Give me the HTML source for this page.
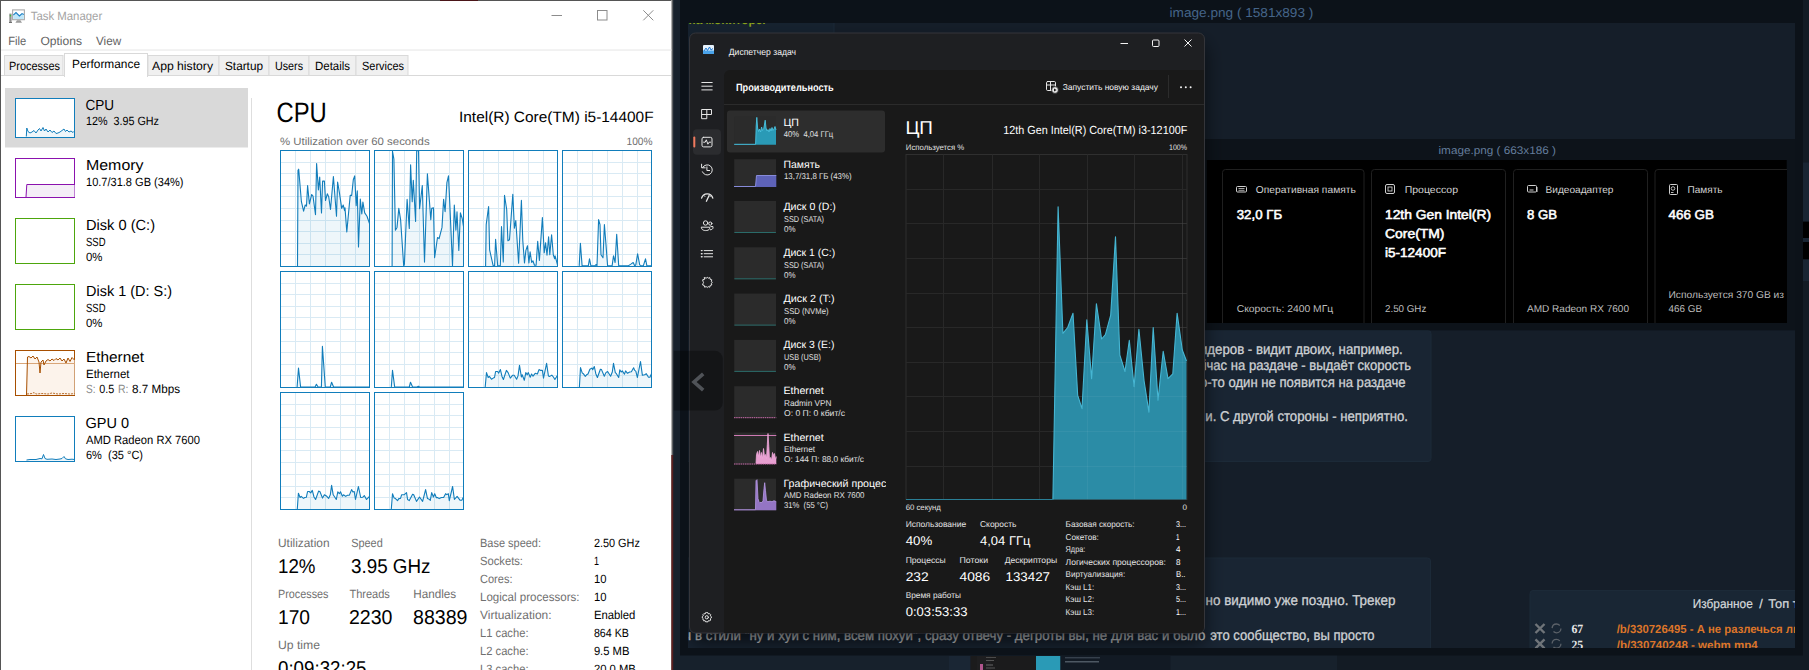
<!DOCTYPE html>
<html lang="ru">
<head>
<meta charset="utf-8">
<title>Task Manager</title>
<style>
html,body{margin:0;padding:0;background:#141d27;overflow:hidden}
body{width:1809px;height:670px;font-family:'Liberation Sans', 'DejaVu Sans', sans-serif}
#screen{position:absolute;left:0;top:0;width:1809px;height:670px;overflow:hidden}
svg{display:block}
</style>
</head>
<body>
<div id="screen">
<svg width="1809" height="670" viewBox="0 0 1809 670" font-family='"Liberation Sans", "DejaVu Sans", sans-serif' text-rendering="geometricPrecision">
<defs><filter id="shadow" x="-10%" y="-10%" width="120%" height="125%"><feGaussianBlur stdDeviation="10"/><feOffset dy="11"/><feComponentTransfer><feFuncA type="linear" slope="0.62"/></feComponentTransfer></filter><clipPath id="gclip"><rect x="1052" y="200" width="135" height="300"/></clipPath></defs>
<g id="image-viewer">
<rect x="673" y="0" width="1136" height="670" fill="#131b24"/>
<rect x="673" y="0" width="664" height="670" fill="#17212c"/>
<rect x="1803" y="162.5" width="6" height="118.5" fill="#192533"/>
<rect x="1803" y="221.6" width="6" height="16.4" fill="#000"/>
<rect x="1803" y="242" width="6" height="17.3" fill="#000"/>
<rect x="949" y="656" width="21.5" height="14" fill="#1a2634"/>
<rect x="970.5" y="656" width="65.5" height="14" fill="#1b1b1c"/>
<rect x="977" y="656" width="14" height="14" fill="#1e1e20"/>
<rect x="980" y="664" width="3" height="6" fill="#b0568d"/>
<rect x="986" y="657" width="10" height="1" fill="#4a4a4a"/>
<rect x="986" y="660" width="8" height="1" fill="#555"/>
<rect x="986" y="664.5" width="7" height="1" fill="#666"/>
<rect x="986" y="667.5" width="9" height="1" fill="#555"/>
<rect x="1036" y="656" width="24.5" height="14" fill="#2a9ab6"/>
<rect x="1060.5" y="656" width="110" height="14" fill="#121a24"/>
<rect x="1065" y="657.3" width="35" height="1" fill="#47525e"/>
<rect x="1065" y="661.2" width="34" height="1.2" fill="#5d6873"/>
<rect x="680" y="0" width="1123" height="655.5" fill="#0c1219"/>
<text x="1169.6" y="16.6" font-size="13" fill="#456589" textLength="143.7" lengthAdjust="spacingAndGlyphs">image.png ( 1581x893 )</text>
<clipPath id="imgclip"><rect x="688" y="23" width="1107" height="625"/></clipPath>
<g id="shared-image" clip-path="url(#imgclip)">
<g id="inner-page">
<rect x="688" y="23" width="1107" height="625" fill="#151e29"/>
<rect x="688" y="23" width="146" height="140" fill="#16222f"/>
<rect x="833.5" y="23" width="1" height="140" fill="#1b2938"/>
<text x="688.5" y="23.8" font-size="13" fill="#8aa31a" textLength="77" lengthAdjust="spacingAndGlyphs" font-weight="700">на мониторе.</text>
<rect x="680" y="330.5" width="751" height="131" fill="#192533" stroke="#1c2a38" stroke-width="1" rx="3"/>
<text x="1402.7" y="353.5" font-size="14.2" fill="#cfd2d5" textLength="209.4" lengthAdjust="spacingAndGlyphs" text-anchor="end"  stroke="#cfd2d5" stroke-width="0.3">сидеров - видит двоих, например.</text>
<text x="1411.1" y="370.4" font-size="14.2" fill="#cfd2d5" textLength="225.7" lengthAdjust="spacingAndGlyphs" text-anchor="end"  stroke="#cfd2d5" stroke-width="0.3">сейчас на раздаче - выдаёт скорость</text>
<text x="1405.6" y="387.3" font-size="14.2" fill="#cfd2d5" textLength="217.4" lengthAdjust="spacingAndGlyphs" text-anchor="end"  stroke="#cfd2d5" stroke-width="0.3">кто-то один не появится на раздаче</text>
<text x="1408" y="421" font-size="14.2" fill="#cfd2d5" textLength="202.7" lengthAdjust="spacingAndGlyphs" text-anchor="end"  stroke="#cfd2d5" stroke-width="0.3">и. С другой стороны - неприятно.</text>
<rect x="680" y="558" width="750.5" height="100" fill="#192533" stroke="#1c2a38" stroke-width="1" rx="3"/>
<text x="1205.6" y="605.4" font-size="14.2" fill="#cfd2d5" textLength="189.9" lengthAdjust="spacingAndGlyphs"  stroke="#cfd2d5" stroke-width="0.3">но видимо уже поздно. Трекер</text>
<text x="691.3" y="639.5" font-size="14.2" fill="#cfd2d5" text-anchor="end"  stroke="#cfd2d5" stroke-width="0.3">ответы</text>
<text x="695" y="639.5" font-size="14.2" fill="#cfd2d5" textLength="510.4" lengthAdjust="spacingAndGlyphs"  stroke="#cfd2d5" stroke-width="0.3">в стили "ну и хуй с ним, всем похуй", сразу отвечу - дегроты вы, не для вас и было</text>
<text x="1210.2" y="639.5" font-size="14.2" fill="#cfd2d5" textLength="164.4" lengthAdjust="spacingAndGlyphs"  stroke="#cfd2d5" stroke-width="0.3">это сообщество, вы просто</text>
<rect x="1530" y="590.5" width="270" height="70" fill="#192634" stroke="#1c2a38" stroke-width="1" rx="3"/>
<text x="1692.7" y="607.9" font-size="12.6" fill="#d6dadd" textLength="60.1" lengthAdjust="spacingAndGlyphs"  stroke="#d6dadd" stroke-width="0.2">Избранное</text>
<text x="1759.3" y="607.9" font-size="12.6" fill="#d6dadd"  stroke="#d6dadd" stroke-width="0.2">/</text>
<text x="1768.2" y="607.9" font-size="12.6" fill="#d6dadd" textLength="66.3" lengthAdjust="spacingAndGlyphs"  stroke="#d6dadd" stroke-width="0.2">Топ тредов</text>
<path d="M1535.5 624.0l9 9m0 -9l-9 9" stroke="#6f7479" stroke-width="2.4" fill="none"/>
<circle cx="1556.5" cy="628.4" r="4.4" fill="none" stroke="#5c6269" stroke-width="1.3" stroke-dasharray="10 3.8"/>
<text x="1571.4" y="633.2" font-size="12.5" fill="#e8e8e8" textLength="11.8" lengthAdjust="spacingAndGlyphs" font-weight="700" font-family='"Liberation Serif", "DejaVu Serif", serif'>67</text>
<text x="1616.7" y="633.2" font-size="11.7" fill="#dd7529" textLength="208" lengthAdjust="spacingAndGlyphs" font-weight="700">/b/330726495 - А не разлечься ли нам</text>
<path d="M1535.5 639.4l9 9m0 -9l-9 9" stroke="#6f7479" stroke-width="2.4" fill="none"/>
<circle cx="1556.5" cy="643.8" r="4.4" fill="none" stroke="#5c6269" stroke-width="1.3" stroke-dasharray="10 3.8"/>
<text x="1571.4" y="648.6" font-size="12.5" fill="#e8e8e8" textLength="11.8" lengthAdjust="spacingAndGlyphs" font-weight="700" font-family='"Liberation Serif", "DejaVu Serif", serif'>25</text>
<text x="1616.7" y="648.6" font-size="11.7" fill="#dd7529" textLength="141" lengthAdjust="spacingAndGlyphs" font-weight="700">/b/330740248 - webm mp4</text>
</g>
<g id="specs-popup">
<rect x="1200" y="139" width="600" height="191.3" fill="#0d131a"/>
<text x="1438.5" y="153.5" font-size="11" fill="#647d9c" textLength="117.5" lengthAdjust="spacingAndGlyphs">image.png ( 663x186 )</text>
<rect x="1206.8" y="160" width="579.9" height="163" fill="#000000"/>
<clipPath id="cardclip"><rect x="1200" y="160" width="587" height="163"/></clipPath><g clip-path="url(#cardclip)">
<rect x="1222.5" y="169.5" width="141.5" height="170" fill="#000" stroke="#202020" stroke-width="1" rx="3"/>
<rect x="1371.5" y="169.5" width="134" height="170" fill="#000" stroke="#202020" stroke-width="1" rx="3"/>
<rect x="1513.5" y="169.5" width="134" height="170" fill="#000" stroke="#202020" stroke-width="1" rx="3"/>
<rect x="1655" y="169.5" width="140" height="170" fill="#000" stroke="#202020" stroke-width="1" rx="3"/>
</g>
<g stroke="#cfcfcf" fill="none" stroke-width="1"><rect x="1236.5" y="186.5" width="10" height="5.5" rx="1"/><path d="M1238.5 188.5h6M1238.5 190.3h6" stroke-width="0.8"/></g>
<text x="1255.8" y="192.7" font-size="10" fill="#d2d2d2" textLength="100" lengthAdjust="spacingAndGlyphs">Оперативная память</text>
<text x="1236.7" y="219.3" font-size="13" fill="#fff" textLength="45.4" lengthAdjust="spacingAndGlyphs"  stroke="#fff" stroke-width="0.55">32,0 ГБ</text>
<text x="1236.7" y="311.8" font-size="10" fill="#bdbdbd" textLength="96.5" lengthAdjust="spacingAndGlyphs">Скорость: 2400 МГц</text>
<g stroke="#cfcfcf" fill="none" stroke-width="1"><rect x="1385.5" y="184.5" width="9" height="9" rx="1.5"/><rect x="1388" y="187" width="4" height="4" stroke-width="0.9"/></g>
<text x="1404.7" y="192.7" font-size="10" fill="#d2d2d2" textLength="53.3" lengthAdjust="spacingAndGlyphs">Процессор</text>
<text x="1385" y="219.3" font-size="13" fill="#fff" textLength="106" lengthAdjust="spacingAndGlyphs"  stroke="#fff" stroke-width="0.55">12th Gen Intel(R)</text>
<text x="1385" y="238.2" font-size="13" fill="#fff" textLength="59.5" lengthAdjust="spacingAndGlyphs"  stroke="#fff" stroke-width="0.55">Core(TM)</text>
<text x="1385" y="257" font-size="13" fill="#fff" textLength="61" lengthAdjust="spacingAndGlyphs"  stroke="#fff" stroke-width="0.55">i5-12400F</text>
<text x="1385" y="311.8" font-size="10" fill="#bdbdbd" textLength="41.3" lengthAdjust="spacingAndGlyphs">2.50 GHz</text>
<g stroke="#cfcfcf" fill="none" stroke-width="1"><rect x="1527.5" y="185.5" width="9" height="6.5" rx="1"/><path d="M1529.5 190h4" /><path d="M1537 187v5" /></g>
<text x="1545.5" y="192.7" font-size="10" fill="#d2d2d2" textLength="68" lengthAdjust="spacingAndGlyphs">Видеоадаптер</text>
<text x="1527" y="219.3" font-size="13" fill="#fff" textLength="30" lengthAdjust="spacingAndGlyphs"  stroke="#fff" stroke-width="0.55">8 GB</text>
<text x="1527" y="311.8" font-size="10" fill="#bdbdbd" textLength="102" lengthAdjust="spacingAndGlyphs">AMD Radeon RX 7600</text>
<g stroke="#cfcfcf" fill="none" stroke-width="1"><rect x="1669.5" y="184.5" width="8" height="10" rx="1"/><circle cx="1673" cy="188.5" r="1.8" stroke-width="0.9"/><path d="M1671 192.5h2.5" stroke-width="0.9"/></g>
<text x="1687.5" y="192.7" font-size="10" fill="#d2d2d2" textLength="35" lengthAdjust="spacingAndGlyphs">Память</text>
<text x="1668.5" y="219.3" font-size="13" fill="#fff" textLength="45.5" lengthAdjust="spacingAndGlyphs"  stroke="#fff" stroke-width="0.55">466 GB</text>
<text x="1668.5" y="297.5" font-size="10" fill="#bdbdbd" textLength="115.5" lengthAdjust="spacingAndGlyphs">Используется 370 GB из</text>
<text x="1668.5" y="311.8" font-size="10" fill="#bdbdbd" textLength="33.5" lengthAdjust="spacingAndGlyphs">466 GB</text>
</g>
<g id="win11-taskmgr">
<rect x="689.5" y="33" width="515" height="600" rx="6" fill="#000" filter="url(#shadow)"/>
<rect x="689.5" y="33" width="515" height="600" fill="#1e1f22" stroke="#34353a" stroke-width="1" rx="6"/>
<path d="M724 633V76a6 6 0 0 1 6-6H1204v557a6 6 0 0 1-6 6z" fill="#191919"/>
<line x1="724" y1="104.5" x2="1204" y2="104.5" stroke="#2b2b2b" stroke-width="1" />
<g id="tm11-icon"><rect x="703" y="45" width="11" height="9" rx="1" fill="#e6f1fb"/><rect x="703" y="50.5" width="11" height="3.5" fill="#4aa3ea"/><polyline points="704,51 706,48 707.5,50.5 709.5,47 711,50 713,48.5" fill="none" stroke="#1f78d1" stroke-width="1"/></g>
<text x="728.8" y="54.5" font-size="9" fill="#f2f2f2" textLength="67.2" lengthAdjust="spacingAndGlyphs">Диспетчер задач</text>
<line x1="1120.5" y1="43.5" x2="1128" y2="43.5" stroke="#f2f2f2" stroke-width="1" />
<rect x="1152.5" y="40" width="6.5" height="6.5" fill="none" stroke="#f2f2f2" stroke-width="1" rx="1"/>
<path d="M1184.5 39.5l7 7m0-7l-7 7" stroke="#f2f2f2" stroke-width="1" fill="none"/>
<rect x="693" y="129.2" width="28" height="25.5" fill="#2b2c2f" rx="4"/>
<rect x="693.3" y="136.5" width="2" height="11" fill="#f0795d" rx="1"/>
<g id="nav-icons" stroke="#e6e6e6" stroke-width="1" fill="none" stroke-linecap="round" stroke-linejoin="round">
<path d="M701.8 82.5h10.4M701.8 86.2h10.4M701.8 89.9h10.4"/>
<path d="M702 109.5h9.5v5h-4.7v4.2h-4.8zM706.8 109.5v5M702 114.5h4.8"/>
<rect x="702" y="137.3" width="10" height="9.6" rx="1.6"/><path d="M703.6 142.2h1.6l1.1-2.4 1.6 4.4 1.2-2h1.5"/>
<path d="M702.6 167.6a5.1 5.1 0 1 1 -.2 4.2M701.6 164.2v3.6h3.6M706.9 166.9v3.6h2.7"/>
<path d="M701.6 198.2a5.8 5.8 0 0 1 11.2 0" stroke-width="1.3"/><path d="M706.4 201.2l2.7-5.8" stroke-width="1.3"/><path d="M704.2 195.6l.8 1M710.6 196l-.6.8" stroke-width="0.8"/>
<circle cx="705.6" cy="223" r="2.2"/><circle cx="710.3" cy="223.6" r="1.6"/><path d="M701.5 227.2h8.2v1c0 3.2-8.2 3.2-8.2 0zM710.8 226.6h2.2v.9c0 1.5-1.2 2.3-2.6 2.3"/>
<path d="M704.2 250.6h8.4M704.2 253.7h8.4M704.2 256.8h8.4" /><path d="M701.4 250.6h.7M701.4 253.7h.7M701.4 256.8h.7" stroke-width="1.4"/>
<path d="M704.6 277.6l1.6.6 1-.9 1 .9 1.6-.6.4 1.8 1.6.4-.5 1.7 1.1 .9-1.1 .9.5 1.7-1.6.4-.4 1.8-1.6-.6-1 .9-1-.9-1.6.6-.4-1.8-1.6-.4.5-1.7a1.3 1.3 0 0 0 0-1.8l-.5-1.7 1.6-.4z"/>
<circle cx="706.8" cy="617.3" r="1.6"/><path d="M706.8 612.6l1.2.2.5 1.2 1.3-.3.9.9-.4 1.2 1 .8v1.4l-1 .8.4 1.2-.9.9-1.3-.3-.5 1.2h-2.4l-.5-1.2-1.3.3-.9-.9.4-1.2-1-.8v-1.4l1-.8-.4-1.2.9-.9 1.3.3.5-1.2z"/>
</g>
<text x="736" y="91.3" font-size="10.5" fill="#ffffff" textLength="97.6" lengthAdjust="spacingAndGlyphs" font-weight="700">Производительность</text>
<g stroke="#e6e6e6" stroke-width="1" fill="none" stroke-linecap="round" stroke-linejoin="round"><rect x="1046.5" y="81.5" width="9" height="9" rx="1.2"/><path d="M1046.5 85h9M1050.5 81.5v9"/></g>
<circle cx="1055" cy="90" r="3.4" fill="#e6e6e6" stroke="#191919" stroke-width="0.8"/><path d="M1054 88.4v3.2l2.6-1.6z" fill="#191919"/>
<text x="1062.7" y="90" font-size="8.6" fill="#f2f2f2" textLength="95.3" lengthAdjust="spacingAndGlyphs">Запустить новую задачу</text>
<line x1="1168.5" y1="75" x2="1168.5" y2="98" stroke="#2c2c2c" stroke-width="1" />
<circle cx="1181" cy="87.3" r="1" fill="#f2f2f2"/>
<circle cx="1185.8" cy="87.3" r="1" fill="#f2f2f2"/>
<circle cx="1190.6" cy="87.3" r="1" fill="#f2f2f2"/>
<rect x="727" y="110.5" width="158" height="42" fill="#2d2d2d" rx="3"/>
<rect x="734.2" y="116.5" width="41.8" height="28.3" fill="#2b2b2b"/>
<polygon points="734.2,144.3 755.6,144.3 756.2,126.0 756.8,117.4 757.6,128.0 758.6,131.5 759.6,129.0 760.6,132.0 761.6,127.0 762.6,130.5 763.6,129.5 764.4,125.0 765.2,120.2 766.0,128.0 767.0,131.0 768.0,129.5 769.0,132.0 770.0,128.5 771.0,131.0 772.0,127.5 773.0,130.5 774.0,129.0 775.0,126.5 776.0,130.0 776.0,144.8 734.2,144.8" fill="#2a9ab6"/>
<polyline points="734.2,144.3 755.6,144.3 756.2,126.0 756.8,117.4 757.6,128.0 758.6,131.5 759.6,129.0 760.6,132.0 761.6,127.0 762.6,130.5 763.6,129.5 764.4,125.0 765.2,120.2 766.0,128.0 767.0,131.0 768.0,129.5 769.0,132.0 770.0,128.5 771.0,131.0 772.0,127.5 773.0,130.5 774.0,129.0 775.0,126.5 776.0,130.0" fill="none" stroke="#49c4e2" stroke-width="0.9"/>
<text x="783.5" y="126" font-size="10.5" fill="#fff" textLength="15.5" lengthAdjust="spacingAndGlyphs">ЦП</text>
<text x="783.8" y="137" font-size="8.5" fill="#e0e0e0" textLength="49.4" lengthAdjust="spacingAndGlyphs">40%  4,04 ГГц</text>
<rect x="734.2" y="159.2" width="41.8" height="27.8" fill="#2b2b2b"/>
<polygon points="734,186.5 755.5,186.5 756.5,175.5 776.3,175.5 776.3,187 734,187" fill="#5e63b8"/>
<polyline points="734,186.5 755.5,186.5 756.5,175.5 776.3,175.5" fill="none" stroke="#8f93e6" stroke-width="0.9"/>
<text x="783.5" y="167.6" font-size="10.5" fill="#fff" textLength="36.4" lengthAdjust="spacingAndGlyphs">Память</text>
<text x="784" y="179" font-size="8.5" fill="#e0e0e0" textLength="67.5" lengthAdjust="spacingAndGlyphs">13,7/31,8 ГБ (43%)</text>
<clipPath id="listclip"><rect x="727" y="105" width="159" height="420"/></clipPath>
<g clip-path="url(#listclip)">
<rect x="734.2" y="201" width="41.8" height="32" fill="#2b2b2b"/>
<line x1="734.4" y1="232.5" x2="775.9" y2="232.5" stroke="#2a6b69" stroke-width="1" />
<text x="783.4" y="210.4" font-size="10.5" fill="#fff" textLength="52.5" lengthAdjust="spacingAndGlyphs">Диск 0 (D:)</text>
<text x="784" y="221.5" font-size="8.5" fill="#e0e0e0" textLength="40" lengthAdjust="spacingAndGlyphs">SSD (SATA)</text>
<text x="784" y="231.9" font-size="8.5" fill="#e0e0e0" textLength="11.5" lengthAdjust="spacingAndGlyphs">0%</text>
<rect x="734.2" y="247.3" width="41.8" height="32" fill="#2b2b2b"/>
<line x1="734.4" y1="278.8" x2="775.9" y2="278.8" stroke="#2a6b69" stroke-width="1" />
<text x="783.4" y="256.42" font-size="10.5" fill="#fff" textLength="51.8" lengthAdjust="spacingAndGlyphs">Диск 1 (C:)</text>
<text x="784" y="267.52" font-size="8.5" fill="#e0e0e0" textLength="40" lengthAdjust="spacingAndGlyphs">SSD (SATA)</text>
<text x="784" y="277.92" font-size="8.5" fill="#e0e0e0" textLength="11.5" lengthAdjust="spacingAndGlyphs">0%</text>
<rect x="734.2" y="293.6" width="41.8" height="32" fill="#2b2b2b"/>
<line x1="734.4" y1="325.1" x2="775.9" y2="325.1" stroke="#2a6b69" stroke-width="1" />
<text x="783.4" y="302.44" font-size="10.5" fill="#fff" textLength="51.1" lengthAdjust="spacingAndGlyphs">Диск 2 (T:)</text>
<text x="784" y="313.54" font-size="8.5" fill="#e0e0e0" textLength="44.5" lengthAdjust="spacingAndGlyphs">SSD (NVMe)</text>
<text x="784" y="323.94" font-size="8.5" fill="#e0e0e0" textLength="11.5" lengthAdjust="spacingAndGlyphs">0%</text>
<rect x="734.2" y="339.9" width="41.8" height="32" fill="#2b2b2b"/>
<line x1="734.4" y1="371.4" x2="775.9" y2="371.4" stroke="#2a6b69" stroke-width="1" />
<text x="783.4" y="348.46" font-size="10.5" fill="#fff" textLength="51" lengthAdjust="spacingAndGlyphs">Диск 3 (E:)</text>
<text x="784" y="359.56" font-size="8.5" fill="#e0e0e0" textLength="37" lengthAdjust="spacingAndGlyphs">USB (USB)</text>
<text x="784" y="369.96" font-size="8.5" fill="#e0e0e0" textLength="11.5" lengthAdjust="spacingAndGlyphs">0%</text>
<rect x="734.2" y="386.2" width="41.8" height="32" fill="#2b2b2b"/>
<line x1="734" y1="417.7" x2="776.3" y2="417.7" stroke="#c96bab" stroke-width="1" stroke-dasharray="1.5 0.7"/>
<text x="783.4" y="394.48" font-size="10.5" fill="#fff" textLength="40.4" lengthAdjust="spacingAndGlyphs">Ethernet</text>
<text x="784" y="405.58" font-size="8.5" fill="#e0e0e0" textLength="47.4" lengthAdjust="spacingAndGlyphs">Radmin VPN</text>
<text x="784" y="415.98" font-size="8.5" fill="#e0e0e0" textLength="61" lengthAdjust="spacingAndGlyphs">О: 0 П: 0 кбит/с</text>
<rect x="734.2" y="432.5" width="41.8" height="32" fill="#2b2b2b"/>
<line x1="734" y1="435.5" x2="776.3" y2="435.5" stroke="#e182c3" stroke-width="0.9" />
<polygon points="756.0,463.5 756.5,454.5 757.5,451.5 758.5,456.5 759.5,450.5 760.5,457.5 761.5,452.5 762.5,458.5 763.5,448.5 764.5,456.5 765.5,454.5 766.5,458.5 767.3,444.5 768.0,433.5 768.8,446.5 769.5,459.5 770.5,457.5 771.5,460.5 772.5,452.5 773.5,455.5 774.5,453.5 775.5,459.5 776.3,456.5 776.3,464.0 756.0,464.0" fill="#e79fd0"/>
<polyline points="756.0,463.5 756.5,454.5 757.5,451.5 758.5,456.5 759.5,450.5 760.5,457.5 761.5,452.5 762.5,458.5 763.5,448.5 764.5,456.5 765.5,454.5 766.5,458.5 767.3,444.5 768.0,433.5 768.8,446.5 769.5,459.5 770.5,457.5 771.5,460.5 772.5,452.5 773.5,455.5 774.5,453.5 775.5,459.5 776.3,456.5" fill="none" stroke="#f0a8da" stroke-width="0.8"/>
<line x1="734" y1="464" x2="776.3" y2="464" stroke="#c96bab" stroke-width="1" stroke-dasharray="1.5 0.7"/>
<text x="783.4" y="440.5" font-size="10.5" fill="#fff" textLength="40.4" lengthAdjust="spacingAndGlyphs">Ethernet</text>
<text x="784" y="451.6" font-size="8.5" fill="#e0e0e0" textLength="31" lengthAdjust="spacingAndGlyphs">Ethernet</text>
<text x="784" y="462" font-size="8.5" fill="#e0e0e0" textLength="80" lengthAdjust="spacingAndGlyphs">О: 144 П: 88,0 кбит/с</text>
<rect x="734.2" y="478.7" width="41.8" height="32" fill="#2b2b2b"/>
<polygon points="734.0,509.7 755.5,509.7 756.0,480.7 757.0,479.7 758.0,498.7 759.0,501.7 760.0,502.7 761.0,502.2 762.0,502.7 763.0,500.7 764.0,488.7 764.7,482.7 765.5,490.7 766.5,500.7 768.0,501.7 770.0,501.2 772.0,501.7 774.0,500.7 776.3,501.7 776.3,510.2 734.0,510.2" fill="#9475c4"/>
<polyline points="734.0,509.7 755.5,509.7 756.0,480.7 757.0,479.7 758.0,498.7 759.0,501.7 760.0,502.7 761.0,502.2 762.0,502.7 763.0,500.7 764.0,488.7 764.7,482.7 765.5,490.7 766.5,500.7 768.0,501.7 770.0,501.2 772.0,501.7 774.0,500.7 776.3,501.7" fill="none" stroke="#b99be8" stroke-width="0.8"/>
<text x="783.4" y="486.52" font-size="10.5" fill="#fff" textLength="129" lengthAdjust="spacingAndGlyphs">Графический процессор 0</text>
<text x="784" y="497.62" font-size="8.5" fill="#e0e0e0" textLength="80.5" lengthAdjust="spacingAndGlyphs">AMD Radeon RX 7600</text>
<text x="784" y="508.02" font-size="8.5" fill="#e0e0e0" textLength="44" lengthAdjust="spacingAndGlyphs">31%  (55 °C)</text>
</g>
<text x="905.4" y="134.4" font-size="18.7" fill="#fff" textLength="27.5" lengthAdjust="spacingAndGlyphs">ЦП</text>
<text x="1187.3" y="134.4" font-size="11.8" fill="#fff" textLength="184" lengthAdjust="spacingAndGlyphs" text-anchor="end">12th Gen Intel(R) Core(TM) i3-12100F</text>
<text x="905.8" y="150.2" font-size="8" fill="#e0e0e0" textLength="58.4" lengthAdjust="spacingAndGlyphs">Используется %</text>
<text x="1187" y="150.2" font-size="8" fill="#e0e0e0" textLength="18" lengthAdjust="spacingAndGlyphs" text-anchor="end">100%</text>
<rect x="906" y="154.5" width="281" height="345" fill="#191919" stroke="#2f2f2f" stroke-width="1"/>
<path d="M943.5 154.5V499.5M992.5 154.5V499.5M1039.5 154.5V499.5M1087.5 154.5V499.5M1134.5 154.5V499.5M1182.5 154.5V499.5M906 189.5H1187M906 223.5H1187M906 258.5H1187M906 293.5H1187M906 327.5H1187M906 362.5H1187M906 396.5H1187M906 431.5H1187M906 466.5H1187" stroke="#282828" stroke-width="1" fill="none"/>
<polygon points="1052.9,499.5 1058.1,206.7 1062.9,333.3 1067.7,327.5 1073.0,313.2 1077.7,395.3 1082.0,408.7 1086.8,319.9 1091.6,378.6 1096.4,303.7 1101.6,339.0 1105.4,334.7 1110.7,315.1 1115.5,236.8 1119.8,354.8 1125.0,371.5 1129.3,340.4 1134.1,386.8 1138.9,329.4 1144.1,381.0 1148.9,412.1 1153.2,327.5 1158.0,400.1 1163.2,351.4 1168.0,378.6 1172.8,373.9 1177.1,313.2 1182.3,350.0 1186.5,361.0 1186.5,499.5 1052.9,499.5" fill="#2b8ca6"/>
<path d="M943.5 154.5V499.5M992.5 154.5V499.5M1039.5 154.5V499.5M1087.5 154.5V499.5M1134.5 154.5V499.5M1182.5 154.5V499.5M906 189.5H1187M906 223.5H1187M906 258.5H1187M906 293.5H1187M906 327.5H1187M906 362.5H1187M906 396.5H1187M906 431.5H1187M906 466.5H1187" stroke="#ffffff" stroke-opacity="0.05" stroke-width="1" fill="none" clip-path="url(#gclip)"/>
<polyline points="1052.9,499.5 1058.1,206.7 1062.9,333.3 1067.7,327.5 1073.0,313.2 1077.7,395.3 1082.0,408.7 1086.8,319.9 1091.6,378.6 1096.4,303.7 1101.6,339.0 1105.4,334.7 1110.7,315.1 1115.5,236.8 1119.8,354.8 1125.0,371.5 1129.3,340.4 1134.1,386.8 1138.9,329.4 1144.1,381.0 1148.9,412.1 1153.2,327.5 1158.0,400.1 1163.2,351.4 1168.0,378.6 1172.8,373.9 1177.1,313.2 1182.3,350.0 1186.5,361.0" fill="none" stroke="#46b6d3" stroke-width="1.1" stroke-linejoin="round"/>
<line x1="906" y1="499.5" x2="1052.89" y2="499.5" stroke="#2a7f96" stroke-width="1" />
<text x="905.7" y="510.2" font-size="8" fill="#e0e0e0" textLength="35.2" lengthAdjust="spacingAndGlyphs">60 секунд</text>
<text x="1187" y="510.2" font-size="8" fill="#e0e0e0" textLength="4.5" lengthAdjust="spacingAndGlyphs" text-anchor="end">0</text>
<text x="905.7" y="527" font-size="8.5" fill="#e4e4e4" textLength="60.5" lengthAdjust="spacingAndGlyphs">Использование</text>
<text x="980" y="527" font-size="8.5" fill="#e4e4e4" textLength="36.5" lengthAdjust="spacingAndGlyphs">Скорость</text>
<text x="905.7" y="562.6" font-size="8.5" fill="#e4e4e4" textLength="40" lengthAdjust="spacingAndGlyphs">Процессы</text>
<text x="959.5" y="562.6" font-size="8.5" fill="#e4e4e4" textLength="28.6" lengthAdjust="spacingAndGlyphs">Потоки</text>
<text x="1004.7" y="562.6" font-size="8.5" fill="#e4e4e4" textLength="52.4" lengthAdjust="spacingAndGlyphs">Дескрипторы</text>
<text x="905.7" y="598.4" font-size="8.5" fill="#e4e4e4" textLength="55.3" lengthAdjust="spacingAndGlyphs">Время работы</text>
<text x="905.7" y="544.7" font-size="12.6" fill="#fff" textLength="26.5" lengthAdjust="spacingAndGlyphs">40%</text>
<text x="980" y="544.7" font-size="12.6" fill="#fff" textLength="50.5" lengthAdjust="spacingAndGlyphs">4,04 ГГц</text>
<text x="905.7" y="580.5" font-size="12.6" fill="#fff" textLength="23" lengthAdjust="spacingAndGlyphs">232</text>
<text x="959.5" y="580.5" font-size="12.6" fill="#fff" textLength="30.7" lengthAdjust="spacingAndGlyphs">4086</text>
<text x="1005.5" y="580.5" font-size="12.6" fill="#fff" textLength="44.5" lengthAdjust="spacingAndGlyphs">133427</text>
<text x="905.7" y="616.4" font-size="12.6" fill="#fff" textLength="61.8" lengthAdjust="spacingAndGlyphs">0:03:53:33</text>
<text x="1065.6" y="527" font-size="8.5" fill="#e4e4e4" textLength="69" lengthAdjust="spacingAndGlyphs">Базовая скорость:</text>
<text x="1176" y="527" font-size="8.5" fill="#fff" textLength="10" lengthAdjust="spacingAndGlyphs">3...</text>
<text x="1065.6" y="539.54" font-size="8.5" fill="#e4e4e4" textLength="33.2" lengthAdjust="spacingAndGlyphs">Сокетов:</text>
<text x="1176" y="539.54" font-size="8.5" fill="#fff" textLength="3.5" lengthAdjust="spacingAndGlyphs">1</text>
<text x="1065.6" y="552.08" font-size="8.5" fill="#e4e4e4" textLength="19.7" lengthAdjust="spacingAndGlyphs">Ядра:</text>
<text x="1176" y="552.08" font-size="8.5" fill="#fff" textLength="4.5" lengthAdjust="spacingAndGlyphs">4</text>
<text x="1065.6" y="564.62" font-size="8.5" fill="#e4e4e4" textLength="100.4" lengthAdjust="spacingAndGlyphs">Логических процессоров:</text>
<text x="1176" y="564.62" font-size="8.5" fill="#fff" textLength="4.5" lengthAdjust="spacingAndGlyphs">8</text>
<text x="1065.6" y="577.16" font-size="8.5" fill="#e4e4e4" textLength="59.6" lengthAdjust="spacingAndGlyphs">Виртуализация:</text>
<text x="1176" y="577.16" font-size="8.5" fill="#fff" textLength="9.5" lengthAdjust="spacingAndGlyphs">В..</text>
<text x="1065.6" y="589.7" font-size="8.5" fill="#e4e4e4" textLength="28.7" lengthAdjust="spacingAndGlyphs">Кэш L1:</text>
<text x="1176" y="589.7" font-size="8.5" fill="#fff" textLength="10" lengthAdjust="spacingAndGlyphs">3...</text>
<text x="1065.6" y="602.24" font-size="8.5" fill="#e4e4e4" textLength="28.7" lengthAdjust="spacingAndGlyphs">Кэш L2:</text>
<text x="1176" y="602.24" font-size="8.5" fill="#fff" textLength="10" lengthAdjust="spacingAndGlyphs">5...</text>
<text x="1065.6" y="614.78" font-size="8.5" fill="#e4e4e4" textLength="28.7" lengthAdjust="spacingAndGlyphs">Кэш L3:</text>
<text x="1176" y="614.78" font-size="8.5" fill="#fff" textLength="10" lengthAdjust="spacingAndGlyphs">1...</text>
</g>
</g>
<path d="M673.5 350.8H714.8a8 8 0 0 1 8 8V402.5a8 8 0 0 1-8 8H673.5z" fill="#000" fill-opacity="0.32"/>
<path d="M703.2 373.8l-9.2 8.2 9.2 8.2" stroke="#505358" stroke-width="3.6" fill="none"/>
</g>
<g id="win10-taskmgr">
<rect x="0" y="0" width="673" height="670" fill="#555"/>
<rect x="1" y="1" width="670.5" height="669" fill="#ffffff"/>
<rect x="671.3" y="0" width="1" height="455" fill="#b5b5b5"/>
<rect x="672.2" y="0" width="1" height="455" fill="#565a5e"/>
<rect x="671.3" y="455" width="1.9" height="215" fill="#5a2020"/>
<rect x="440" y="0" width="38" height="1" fill="#4a1518"/>
<g id="tm-icon"><rect x="12.6" y="9.9" width="11.8" height="9.8" fill="#ffffff" stroke="#a9a9a9" stroke-width="1.1"/><polygon points="13.3,15.2 16,12.6 19.4,16 22,13.6 23.8,14.6 23.8,19 13.3,19" fill="#bfe6f8"/><polyline points="13.3,15.2 16,12.6 19.4,16 22,13.6 23.8,14.6" fill="none" stroke="#1a7fc4" stroke-width="1.1"/><polygon points="17,20.3 20.4,20.3 22,22.7 15.4,22.7" fill="#9c9c9c"/><rect x="9.3" y="13.6" width="2.3" height="8.6" fill="#909090"/><rect x="9.8" y="14.9" width="1.3" height="1.4" fill="#2fc62f"/><rect x="9" y="22" width="3" height="0.8" fill="#4e4e4e"/></g>
<text x="30.7" y="20" font-size="12" fill="#a4a4a4" textLength="71.5" lengthAdjust="spacingAndGlyphs">Task Manager</text>
<line x1="551.5" y1="15.5" x2="562" y2="15.5" stroke="#8c8c8c" stroke-width="1" />
<rect x="597.5" y="10.5" width="9.5" height="9.5" fill="none" stroke="#8c8c8c" stroke-width="1"/>
<path d="M643.3 10.3L653.3 20.3M653.3 10.3L643.3 20.3" stroke="#8c8c8c" stroke-width="1" fill="none"/>
<text x="8.3" y="44.7" font-size="12" fill="#636363" textLength="18" lengthAdjust="spacingAndGlyphs">File</text>
<text x="40.4" y="44.7" font-size="12" fill="#636363" textLength="41.6" lengthAdjust="spacingAndGlyphs">Options</text>
<text x="96" y="44.7" font-size="12" fill="#636363" textLength="25.2" lengthAdjust="spacingAndGlyphs">View</text>
<rect x="1" y="49.3" width="670.3" height="1.5" fill="#eeeeee"/>
<line x1="1" y1="75.5" x2="671" y2="75.5" stroke="#d9d9d9" stroke-width="1" />
<rect x="4.5" y="55.5" width="58.5" height="20" fill="#f0f0f0" stroke="#d9d9d9" stroke-width="1"/>
<text x="9" y="69.8" font-size="12" fill="#000" textLength="51" lengthAdjust="spacingAndGlyphs">Processes</text>
<rect x="148" y="55.5" width="71" height="20" fill="#f0f0f0" stroke="#d9d9d9" stroke-width="1"/>
<text x="152" y="69.8" font-size="12" fill="#000" textLength="61" lengthAdjust="spacingAndGlyphs">App history</text>
<rect x="219" y="55.5" width="50" height="20" fill="#f0f0f0" stroke="#d9d9d9" stroke-width="1"/>
<text x="225" y="69.8" font-size="12" fill="#000" textLength="38" lengthAdjust="spacingAndGlyphs">Startup</text>
<rect x="269" y="55.5" width="40" height="20" fill="#f0f0f0" stroke="#d9d9d9" stroke-width="1"/>
<text x="275" y="69.8" font-size="12" fill="#000" textLength="28" lengthAdjust="spacingAndGlyphs">Users</text>
<rect x="309" y="55.5" width="47" height="20" fill="#f0f0f0" stroke="#d9d9d9" stroke-width="1"/>
<text x="315" y="69.8" font-size="12" fill="#000" textLength="35" lengthAdjust="spacingAndGlyphs">Details</text>
<rect x="356" y="55.5" width="52" height="20" fill="#f0f0f0" stroke="#d9d9d9" stroke-width="1"/>
<text x="362" y="69.8" font-size="12" fill="#000" textLength="42" lengthAdjust="spacingAndGlyphs">Services</text>
<rect x="64.5" y="53.5" width="83" height="23" fill="#ffffff" stroke="#d9d9d9" stroke-width="1"/>
<rect x="65" y="74" width="82" height="3" fill="#ffffff"/>
<text x="72" y="67.8" font-size="12" fill="#000" textLength="68" lengthAdjust="spacingAndGlyphs">Performance</text>
<rect x="5" y="88" width="243" height="59.5" fill="#d9d9d9"/>
<line x1="251.5" y1="98" x2="251.5" y2="670" stroke="#dedede" stroke-width="1" />
<rect x="15.5" y="98.5" width="59" height="39" fill="#fff" stroke="#117dbb" stroke-width="1"/>
<polygon points="26.3,136.5 26.8,128.0 28.0,131.5 30.0,133.0 32.0,132.0 34.0,130.5 36.0,133.0 38.0,130.0 39.5,128.5 41.0,131.0 43.0,127.5 44.5,131.0 46.0,129.0 48.0,132.0 50.0,130.0 52.0,132.5 54.0,131.0 56.0,133.5 58.0,133.0 60.0,132.0 62.0,130.5 64.0,129.0 65.5,131.5 67.0,130.0 69.0,132.0 71.0,131.0 73.0,132.5 74.5,131.0 74.5,137.0 26.3,137.0" fill="#117dbb" fill-opacity="0.07"/>
<polyline points="26.3,136.5 26.8,128.0 28.0,131.5 30.0,133.0 32.0,132.0 34.0,130.5 36.0,133.0 38.0,130.0 39.5,128.5 41.0,131.0 43.0,127.5 44.5,131.0 46.0,129.0 48.0,132.0 50.0,130.0 52.0,132.5 54.0,131.0 56.0,133.5 58.0,133.0 60.0,132.0 62.0,130.5 64.0,129.0 65.5,131.5 67.0,130.0 69.0,132.0 71.0,131.0 73.0,132.5 74.5,131.0" fill="none" stroke="#117dbb" stroke-width="1"/>
<text x="85.5" y="109.8" font-size="14.7" fill="#000" textLength="28.6" lengthAdjust="spacingAndGlyphs">CPU</text>
<text x="86" y="125.4" font-size="12" fill="#000" textLength="73" lengthAdjust="spacingAndGlyphs">12%  3.95 GHz</text>
<rect x="15.5" y="158.5" width="59" height="39" fill="#fff" stroke="#8b12ae" stroke-width="1"/>
<polygon points="26,197 26.8,185 74.5,185 74.5,197" fill="#f4eef7"/>
<polyline points="26,197 26.8,184.5 74.5,184.5" fill="none" stroke="#8b12ae" stroke-width="1"/>
<text x="86" y="170" font-size="14.7" fill="#000" textLength="57.5" lengthAdjust="spacingAndGlyphs">Memory</text>
<text x="86" y="186.3" font-size="12" fill="#000" textLength="97.5" lengthAdjust="spacingAndGlyphs">10.7/31.8 GB (34%)</text>
<rect x="15.5" y="218.5" width="59" height="45" fill="#fff" stroke="#4da60c" stroke-width="1"/>
<text x="86" y="230" font-size="14.7" fill="#000" textLength="69" lengthAdjust="spacingAndGlyphs">Disk 0 (C:)</text>
<text x="86" y="246" font-size="12" fill="#000" textLength="19.5" lengthAdjust="spacingAndGlyphs">SSD</text>
<text x="86" y="261" font-size="12" fill="#000" textLength="16.5" lengthAdjust="spacingAndGlyphs">0%</text>
<rect x="15.5" y="284.5" width="59" height="45" fill="#fff" stroke="#4da60c" stroke-width="1"/>
<text x="86" y="296" font-size="14.7" fill="#000" textLength="86" lengthAdjust="spacingAndGlyphs">Disk 1 (D: S:)</text>
<text x="86" y="312" font-size="12" fill="#000" textLength="19.5" lengthAdjust="spacingAndGlyphs">SSD</text>
<text x="86" y="327" font-size="12" fill="#000" textLength="16.5" lengthAdjust="spacingAndGlyphs">0%</text>
<rect x="15.5" y="350.5" width="59" height="45" fill="#fff" stroke="#a74f01" stroke-width="1"/>
<polygon points="26.5,395.0 27.5,357.0 29.0,356.5 31.0,358.0 33.0,356.0 35.0,359.0 37.0,357.0 39.0,362.0 40.0,373.0 41.0,362.0 43.0,360.0 44.0,365.0 46.0,361.0 48.0,359.5 50.0,361.0 52.0,359.0 54.0,360.5 56.0,358.5 58.0,360.0 60.0,358.0 62.0,361.0 64.0,359.0 66.0,363.0 68.0,358.0 70.0,361.5 72.0,357.5 74.5,360.0 74.5,395.0 26.5,395.0" fill="#fcf3eb"/>
<line x1="16" y1="363.5" x2="75" y2="363.5" stroke="#d9a679" stroke-width="1" />
<polyline points="26.5,395.0 27.5,357.0 29.0,356.5 31.0,358.0 33.0,356.0 35.0,359.0 37.0,357.0 39.0,362.0 40.0,373.0 41.0,362.0 43.0,360.0 44.0,365.0 46.0,361.0 48.0,359.5 50.0,361.0 52.0,359.0 54.0,360.5 56.0,358.5 58.0,360.0 60.0,358.0 62.0,361.0 64.0,359.0 66.0,363.0 68.0,358.0 70.0,361.5 72.0,357.5 74.5,360.0" fill="none" stroke="#a74f01" stroke-width="1"/>
<polyline points="27,394 32,393.5 34,392.5 36,394 42,393.5 48,394 52,393 58,394 64,393.5 70,394 74.5,393.5" fill="none" stroke="#a74f01" stroke-width="0.8" stroke-dasharray="2 1"/>
<text x="86" y="361.9" font-size="14.7" fill="#000" textLength="58" lengthAdjust="spacingAndGlyphs">Ethernet</text>
<text x="86" y="378" font-size="12" fill="#000" textLength="43.5" lengthAdjust="spacingAndGlyphs">Ethernet</text>
<text x="86" y="392.9" font-size="12" fill="#8a8a8a" textLength="9.5" lengthAdjust="spacingAndGlyphs">S:</text>
<text x="99.3" y="392.9" font-size="12" fill="#000" textLength="15" lengthAdjust="spacingAndGlyphs">0.5</text>
<text x="118" y="392.9" font-size="12" fill="#8a8a8a" textLength="10.5" lengthAdjust="spacingAndGlyphs">R:</text>
<text x="132" y="392.9" font-size="12" fill="#000" textLength="48" lengthAdjust="spacingAndGlyphs">8.7 Mbps</text>
<rect x="15.5" y="416.5" width="59" height="45" fill="#fff" stroke="#117dbb" stroke-width="1"/>
<polygon points="26.5,460.0 30.0,459.5 36.0,459.5 40.0,458.5 42.0,458.8 43.5,454.5 45.0,458.5 47.0,459.3 52.0,459.0 56.0,459.5 60.0,459.0 62.0,458.5 64.0,456.5 65.5,458.8 68.0,459.5 72.0,459.2 74.5,459.5 74.5,461.0 26.5,461.0" fill="#117dbb" fill-opacity="0.07"/>
<polyline points="26.5,460.0 30.0,459.5 36.0,459.5 40.0,458.5 42.0,458.8 43.5,454.5 45.0,458.5 47.0,459.3 52.0,459.0 56.0,459.5 60.0,459.0 62.0,458.5 64.0,456.5 65.5,458.8 68.0,459.5 72.0,459.2 74.5,459.5" fill="none" stroke="#117dbb" stroke-width="1"/>
<text x="85.5" y="427.5" font-size="14.7" fill="#000" textLength="43.5" lengthAdjust="spacingAndGlyphs">GPU 0</text>
<text x="86" y="443.6" font-size="12" fill="#000" textLength="114" lengthAdjust="spacingAndGlyphs">AMD Radeon RX 7600</text>
<text x="86" y="458.6" font-size="12" fill="#000" textLength="57" lengthAdjust="spacingAndGlyphs">6%  (35 °C)</text>
<text x="276.5" y="121.5" font-size="28" fill="#000" textLength="50.3" lengthAdjust="spacingAndGlyphs">CPU</text>
<text x="459" y="122.1" font-size="15" fill="#000" textLength="194.6" lengthAdjust="spacingAndGlyphs">Intel(R) Core(TM) i5-14400F</text>
<text x="280" y="145" font-size="10.7" fill="#707070" textLength="149.6" lengthAdjust="spacingAndGlyphs">% Utilization over 60 seconds</text>
<text x="652.5" y="145" font-size="10.7" fill="#707070" textLength="26" lengthAdjust="spacingAndGlyphs" text-anchor="end">100%</text>
<g id="core1">
<rect x="280.5" y="150.5" width="89" height="116" fill="#fff"/>
<path d="M295.5 150.5V266.5M310.5 150.5V266.5M325.5 150.5V266.5M340.5 150.5V266.5M355.5 150.5V266.5M280.5 162.5H369.5M280.5 173.5H369.5M280.5 185.5H369.5M280.5 196.5H369.5M280.5 208.5H369.5M280.5 220.5H369.5M280.5 231.5H369.5M280.5 243.5H369.5M280.5 254.5H369.5" stroke="#d9eaf4" stroke-width="1" fill="none"/>
<polygon points="297.5,266.0 298.0,170.3 298.7,169.2 301.4,201.7 303.6,211.1 305.2,205.0 306.5,206.1 307.6,185.5 309.4,203.9 311.7,194.5 313.0,196.1 315.5,214.7 316.6,163.6 318.4,190.0 319.7,177.0 321.5,212.9 322.6,181.1 324.4,181.1 325.5,200.5 327.3,193.8 328.7,196.7 330.5,209.5 333.4,176.6 336.5,216.2 337.6,182.0 339.4,192.7 341.7,208.4 343.2,205.0 344.6,210.6 345.0,207.9 346.8,231.9 350.2,195.4 351.7,195.4 353.3,179.7 354.7,175.9 356.2,205.7 357.3,190.9 358.5,246.9 360.3,199.0 361.8,214.0 362.9,202.1 364.7,212.9 367.0,216.2 369.5,223.6 369.5,266.5 297.5,266.5" fill="#117dbb" fill-opacity="0.07"/>
<polyline points="297.5,266.0 298.0,170.3 298.7,169.2 301.4,201.7 303.6,211.1 305.2,205.0 306.5,206.1 307.6,185.5 309.4,203.9 311.7,194.5 313.0,196.1 315.5,214.7 316.6,163.6 318.4,190.0 319.7,177.0 321.5,212.9 322.6,181.1 324.4,181.1 325.5,200.5 327.3,193.8 328.7,196.7 330.5,209.5 333.4,176.6 336.5,216.2 337.6,182.0 339.4,192.7 341.7,208.4 343.2,205.0 344.6,210.6 345.0,207.9 346.8,231.9 350.2,195.4 351.7,195.4 353.3,179.7 354.7,175.9 356.2,205.7 357.3,190.9 358.5,246.9 360.3,199.0 361.8,214.0 362.9,202.1 364.7,212.9 367.0,216.2 369.5,223.6" fill="none" stroke="#117dbb" stroke-width="1.1" stroke-linejoin="round"/>
<rect x="280.5" y="150.5" width="89" height="116" fill="none" stroke="#117dbb" stroke-width="1"/>
</g>
<g id="core2">
<rect x="374.5" y="150.5" width="89" height="116" fill="#fff"/>
<path d="M389.5 150.5V266.5M404.5 150.5V266.5M419.5 150.5V266.5M434.5 150.5V266.5M449.5 150.5V266.5M374.5 162.5H463.5M374.5 173.5H463.5M374.5 185.5H463.5M374.5 196.5H463.5M374.5 208.5H463.5M374.5 220.5H463.5M374.5 231.5H463.5M374.5 243.5H463.5M374.5 254.5H463.5" stroke="#d9eaf4" stroke-width="1" fill="none"/>
<polygon points="392.1,266.0 392.5,151.3 393.9,159.1 395.4,230.3 397.0,227.4 398.8,208.4 400.6,219.6 403.7,266.0 404.4,264.4 407.1,199.4 409.3,228.5 410.6,164.7 412.2,201.7 413.3,180.4 415.6,221.4 416.7,150.6 418.5,150.6 419.6,208.8 422.3,185.5 424.5,262.1 427.4,173.7 430.8,219.6 431.7,208.4 433.5,207.9 434.6,257.7 437.5,237.5 439.1,238.6 442.0,227.4 443.6,199.4 445.1,211.7 446.9,182.6 448.5,175.9 449.8,203.9 452.5,266.0 454.3,205.0 455.9,230.3 457.0,211.7 458.8,250.5 460.4,212.9 462.2,218.5 463.5,226.3 463.5,266.5 392.1,266.5" fill="#117dbb" fill-opacity="0.07"/>
<polyline points="392.1,266.0 392.5,151.3 393.9,159.1 395.4,230.3 397.0,227.4 398.8,208.4 400.6,219.6 403.7,266.0 404.4,264.4 407.1,199.4 409.3,228.5 410.6,164.7 412.2,201.7 413.3,180.4 415.6,221.4 416.7,150.6 418.5,150.6 419.6,208.8 422.3,185.5 424.5,262.1 427.4,173.7 430.8,219.6 431.7,208.4 433.5,207.9 434.6,257.7 437.5,237.5 439.1,238.6 442.0,227.4 443.6,199.4 445.1,211.7 446.9,182.6 448.5,175.9 449.8,203.9 452.5,266.0 454.3,205.0 455.9,230.3 457.0,211.7 458.8,250.5 460.4,212.9 462.2,218.5 463.5,226.3" fill="none" stroke="#117dbb" stroke-width="1.1" stroke-linejoin="round"/>
<rect x="374.5" y="150.5" width="89" height="116" fill="none" stroke="#117dbb" stroke-width="1"/>
</g>
<g id="core3">
<rect x="468.5" y="150.5" width="89" height="116" fill="#fff"/>
<path d="M483.5 150.5V266.5M498.5 150.5V266.5M513.5 150.5V266.5M528.5 150.5V266.5M543.5 150.5V266.5M468.5 162.5H557.5M468.5 173.5H557.5M468.5 185.5H557.5M468.5 196.5H557.5M468.5 208.5H557.5M468.5 220.5H557.5M468.5 231.5H557.5M468.5 243.5H557.5M468.5 254.5H557.5" stroke="#d9eaf4" stroke-width="1" fill="none"/>
<polygon points="485.6,265.9 486.2,224.6 488.6,206.5 489.6,249.8 493.2,265.9 494.6,265.9 495.6,239.3 497.7,265.9 500.3,265.9 501.5,226.6 503.3,261.9 504.5,195.4 506.7,209.5 507.9,240.7 509.5,239.7 512.8,194.4 514.4,228.2 515.8,220.6 518.6,263.3 521.4,200.4 522.8,240.7 524.5,262.9 525.9,250.4 527.5,245.7 528.9,262.9 530.1,251.8 531.7,262.5 532.9,260.8 534.5,265.3 536.1,265.3 537.7,241.3 539.4,260.4 542.4,217.5 544.2,252.8 545.6,242.7 547.0,255.2 548.6,236.7 549.8,254.8 551.6,234.7 553.3,254.8 554.7,258.8 555.1,255.8 557.5,264.9 557.5,266.5 485.6,266.5" fill="#117dbb" fill-opacity="0.07"/>
<polyline points="485.6,265.9 486.2,224.6 488.6,206.5 489.6,249.8 493.2,265.9 494.6,265.9 495.6,239.3 497.7,265.9 500.3,265.9 501.5,226.6 503.3,261.9 504.5,195.4 506.7,209.5 507.9,240.7 509.5,239.7 512.8,194.4 514.4,228.2 515.8,220.6 518.6,263.3 521.4,200.4 522.8,240.7 524.5,262.9 525.9,250.4 527.5,245.7 528.9,262.9 530.1,251.8 531.7,262.5 532.9,260.8 534.5,265.3 536.1,265.3 537.7,241.3 539.4,260.4 542.4,217.5 544.2,252.8 545.6,242.7 547.0,255.2 548.6,236.7 549.8,254.8 551.6,234.7 553.3,254.8 554.7,258.8 555.1,255.8 557.5,264.9" fill="none" stroke="#117dbb" stroke-width="1.1" stroke-linejoin="round"/>
<rect x="468.5" y="150.5" width="89" height="116" fill="none" stroke="#117dbb" stroke-width="1"/>
</g>
<g id="core4">
<rect x="562.5" y="150.5" width="89" height="116" fill="#fff"/>
<path d="M577.5 150.5V266.5M592.5 150.5V266.5M607.5 150.5V266.5M622.5 150.5V266.5M637.5 150.5V266.5M562.5 162.5H651.5M562.5 173.5H651.5M562.5 185.5H651.5M562.5 196.5H651.5M562.5 208.5H651.5M562.5 220.5H651.5M562.5 231.5H651.5M562.5 243.5H651.5M562.5 254.5H651.5" stroke="#d9eaf4" stroke-width="1" fill="none"/>
<polygon points="579.2,265.9 580.4,243.3 582.1,265.9 588.3,265.9 589.5,258.8 590.9,265.9 594.9,265.9 596.0,264.5 597.0,265.9 598.6,219.6 600.0,224.6 601.0,254.8 603.0,257.8 604.4,224.6 606.0,244.7 607.6,265.9 612.1,265.9 613.5,255.8 615.1,262.5 616.7,234.3 618.7,265.9 628.2,265.9 631.2,263.9 633.2,262.5 634.8,265.9 635.8,264.9 637.6,253.8 639.7,264.9 641.3,265.9 643.3,265.9 645.5,258.8 646.9,265.9 651.5,265.9 651.5,266.5 579.2,266.5" fill="#117dbb" fill-opacity="0.07"/>
<polyline points="579.2,265.9 580.4,243.3 582.1,265.9 588.3,265.9 589.5,258.8 590.9,265.9 594.9,265.9 596.0,264.5 597.0,265.9 598.6,219.6 600.0,224.6 601.0,254.8 603.0,257.8 604.4,224.6 606.0,244.7 607.6,265.9 612.1,265.9 613.5,255.8 615.1,262.5 616.7,234.3 618.7,265.9 628.2,265.9 631.2,263.9 633.2,262.5 634.8,265.9 635.8,264.9 637.6,253.8 639.7,264.9 641.3,265.9 643.3,265.9 645.5,258.8 646.9,265.9 651.5,265.9" fill="none" stroke="#117dbb" stroke-width="1.1" stroke-linejoin="round"/>
<rect x="562.5" y="150.5" width="89" height="116" fill="none" stroke="#117dbb" stroke-width="1"/>
</g>
<g id="core5">
<rect x="280.5" y="271.5" width="89" height="116" fill="#fff"/>
<path d="M295.5 271.5V387.5M310.5 271.5V387.5M325.5 271.5V387.5M340.5 271.5V387.5M355.5 271.5V387.5M280.5 283.5H369.5M280.5 294.5H369.5M280.5 306.5H369.5M280.5 317.5H369.5M280.5 329.5H369.5M280.5 341.5H369.5M280.5 352.5H369.5M280.5 364.5H369.5M280.5 375.5H369.5" stroke="#d9eaf4" stroke-width="1" fill="none"/>
<polygon points="297.1,387.0 298.5,368.1 300.6,387.0 315.1,387.0 316.4,384.2 318.1,387.0 321.4,387.0 322.4,346.4 325.3,387.0 330.3,387.0 331.6,382.2 333.6,387.0 369.5,387.0 369.5,387.5 297.1,387.5" fill="#117dbb" fill-opacity="0.07"/>
<polyline points="297.1,387.0 298.5,368.1 300.6,387.0 315.1,387.0 316.4,384.2 318.1,387.0 321.4,387.0 322.4,346.4 325.3,387.0 330.3,387.0 331.6,382.2 333.6,387.0 369.5,387.0" fill="none" stroke="#117dbb" stroke-width="1.1" stroke-linejoin="round"/>
<rect x="280.5" y="271.5" width="89" height="116" fill="none" stroke="#117dbb" stroke-width="1"/>
</g>
<g id="core6">
<rect x="374.5" y="271.5" width="89" height="116" fill="#fff"/>
<path d="M389.5 271.5V387.5M404.5 271.5V387.5M419.5 271.5V387.5M434.5 271.5V387.5M449.5 271.5V387.5M374.5 283.5H463.5M374.5 294.5H463.5M374.5 306.5H463.5M374.5 317.5H463.5M374.5 329.5H463.5M374.5 341.5H463.5M374.5 352.5H463.5M374.5 364.5H463.5M374.5 375.5H463.5" stroke="#d9eaf4" stroke-width="1" fill="none"/>
<polygon points="391.3,387.0 392.5,370.4 394.7,387.0 409.3,387.0 410.5,382.2 412.6,387.0 417.0,387.0 418.4,386.2 419.5,387.0 463.5,387.0 463.5,387.5 391.3,387.5" fill="#117dbb" fill-opacity="0.07"/>
<polyline points="391.3,387.0 392.5,370.4 394.7,387.0 409.3,387.0 410.5,382.2 412.6,387.0 417.0,387.0 418.4,386.2 419.5,387.0 463.5,387.0" fill="none" stroke="#117dbb" stroke-width="1.1" stroke-linejoin="round"/>
<rect x="374.5" y="271.5" width="89" height="116" fill="none" stroke="#117dbb" stroke-width="1"/>
</g>
<g id="core7">
<rect x="468.5" y="271.5" width="89" height="116" fill="#fff"/>
<path d="M483.5 271.5V387.5M498.5 271.5V387.5M513.5 271.5V387.5M528.5 271.5V387.5M543.5 271.5V387.5M468.5 283.5H557.5M468.5 294.5H557.5M468.5 306.5H557.5M468.5 317.5H557.5M468.5 329.5H557.5M468.5 341.5H557.5M468.5 352.5H557.5M468.5 364.5H557.5M468.5 375.5H557.5" stroke="#d9eaf4" stroke-width="1" fill="none"/>
<polygon points="485.2,387.0 486.5,372.6 488.2,377.5 489.3,376.4 491.5,379.2 493.2,378.1 494.5,377.5 495.6,371.5 497.6,371.5 498.7,373.1 500.4,369.6 502.0,376.4 503.4,379.5 506.4,370.4 508.1,372.6 510.3,378.1 512.5,375.3 514.2,375.3 516.6,379.2 518.0,375.9 519.5,365.4 521.4,377.0 522.2,374.8 524.3,380.3 525.8,372.6 527.2,374.8 528.3,372.6 530.2,377.3 531.6,374.0 533.0,376.2 535.2,373.3 537.4,374.0 539.0,369.6 540.7,370.4 542.4,370.4 543.5,378.1 546.6,363.4 548.4,375.9 549.8,376.4 551.8,375.1 553.4,377.0 554.9,379.5 557.5,375.3 557.5,387.5 485.2,387.5" fill="#117dbb" fill-opacity="0.07"/>
<polyline points="485.2,387.0 486.5,372.6 488.2,377.5 489.3,376.4 491.5,379.2 493.2,378.1 494.5,377.5 495.6,371.5 497.6,371.5 498.7,373.1 500.4,369.6 502.0,376.4 503.4,379.5 506.4,370.4 508.1,372.6 510.3,378.1 512.5,375.3 514.2,375.3 516.6,379.2 518.0,375.9 519.5,365.4 521.4,377.0 522.2,374.8 524.3,380.3 525.8,372.6 527.2,374.8 528.3,372.6 530.2,377.3 531.6,374.0 533.0,376.2 535.2,373.3 537.4,374.0 539.0,369.6 540.7,370.4 542.4,370.4 543.5,378.1 546.6,363.4 548.4,375.9 549.8,376.4 551.8,375.1 553.4,377.0 554.9,379.5 557.5,375.3" fill="none" stroke="#117dbb" stroke-width="1.1" stroke-linejoin="round"/>
<rect x="468.5" y="271.5" width="89" height="116" fill="none" stroke="#117dbb" stroke-width="1"/>
</g>
<g id="core8">
<rect x="562.5" y="271.5" width="89" height="116" fill="#fff"/>
<path d="M577.5 271.5V387.5M592.5 271.5V387.5M607.5 271.5V387.5M622.5 271.5V387.5M637.5 271.5V387.5M562.5 283.5H651.5M562.5 294.5H651.5M562.5 306.5H651.5M562.5 317.5H651.5M562.5 329.5H651.5M562.5 341.5H651.5M562.5 352.5H651.5M562.5 364.5H651.5M562.5 375.5H651.5" stroke="#d9eaf4" stroke-width="1" fill="none"/>
<polygon points="579.4,387.0 580.5,367.6 582.2,372.9 583.3,373.7 585.3,376.4 586.6,374.8 588.0,374.0 589.9,369.2 592.1,368.1 592.7,369.8 594.3,366.5 595.8,373.7 597.4,377.5 600.4,369.2 601.5,369.6 604.3,376.2 605.9,372.6 607.6,371.5 610.6,376.2 612.3,372.0 613.5,363.4 615.3,372.6 616.4,373.7 618.7,377.5 619.8,369.8 621.2,372.0 622.3,370.9 624.5,374.2 625.6,370.9 627.5,373.3 629.7,372.0 631.4,371.8 633.6,367.8 634.7,370.4 635.8,371.1 637.4,377.5 640.5,361.5 642.4,375.3 644.6,374.8 646.3,373.7 648.5,377.3 649.9,377.3 651.5,373.7 651.5,387.5 579.4,387.5" fill="#117dbb" fill-opacity="0.07"/>
<polyline points="579.4,387.0 580.5,367.6 582.2,372.9 583.3,373.7 585.3,376.4 586.6,374.8 588.0,374.0 589.9,369.2 592.1,368.1 592.7,369.8 594.3,366.5 595.8,373.7 597.4,377.5 600.4,369.2 601.5,369.6 604.3,376.2 605.9,372.6 607.6,371.5 610.6,376.2 612.3,372.0 613.5,363.4 615.3,372.6 616.4,373.7 618.7,377.5 619.8,369.8 621.2,372.0 622.3,370.9 624.5,374.2 625.6,370.9 627.5,373.3 629.7,372.0 631.4,371.8 633.6,367.8 634.7,370.4 635.8,371.1 637.4,377.5 640.5,361.5 642.4,375.3 644.6,374.8 646.3,373.7 648.5,377.3 649.9,377.3 651.5,373.7" fill="none" stroke="#117dbb" stroke-width="1.1" stroke-linejoin="round"/>
<rect x="562.5" y="271.5" width="89" height="116" fill="none" stroke="#117dbb" stroke-width="1"/>
</g>
<g id="core9">
<rect x="280.5" y="392.5" width="89" height="117" fill="#fff"/>
<path d="M295.5 392.5V509.5M310.5 392.5V509.5M325.5 392.5V509.5M340.5 392.5V509.5M355.5 392.5V509.5M280.5 404.5H369.5M280.5 415.5H369.5M280.5 427.5H369.5M280.5 439.5H369.5M280.5 450.5H369.5M280.5 462.5H369.5M280.5 474.5H369.5M280.5 486.5H369.5M280.5 497.5H369.5" stroke="#d9eaf4" stroke-width="1" fill="none"/>
<polygon points="297.3,509.0 298.4,493.3 300.1,497.5 301.2,496.4 303.5,498.4 304.8,497.5 306.3,497.3 307.6,491.5 309.2,491.5 310.7,492.9 312.3,490.4 314.0,497.0 315.6,499.5 318.6,491.1 320.0,491.8 322.5,498.1 324.4,494.8 326.4,495.9 328.6,498.4 330.3,494.8 331.6,485.4 333.2,494.8 334.7,497.0 336.3,499.5 337.8,491.8 339.4,493.7 340.5,491.8 342.4,496.2 343.5,494.8 345.7,496.4 347.4,495.3 349.4,495.1 351.6,489.6 352.9,492.0 354.2,491.5 355.5,499.5 358.4,486.5 360.7,497.5 362.6,497.3 364.3,495.6 366.5,499.5 367.8,498.1 369.5,496.4 369.5,509.5 297.3,509.5" fill="#117dbb" fill-opacity="0.07"/>
<polyline points="297.3,509.0 298.4,493.3 300.1,497.5 301.2,496.4 303.5,498.4 304.8,497.5 306.3,497.3 307.6,491.5 309.2,491.5 310.7,492.9 312.3,490.4 314.0,497.0 315.6,499.5 318.6,491.1 320.0,491.8 322.5,498.1 324.4,494.8 326.4,495.9 328.6,498.4 330.3,494.8 331.6,485.4 333.2,494.8 334.7,497.0 336.3,499.5 337.8,491.8 339.4,493.7 340.5,491.8 342.4,496.2 343.5,494.8 345.7,496.4 347.4,495.3 349.4,495.1 351.6,489.6 352.9,492.0 354.2,491.5 355.5,499.5 358.4,486.5 360.7,497.5 362.6,497.3 364.3,495.6 366.5,499.5 367.8,498.1 369.5,496.4" fill="none" stroke="#117dbb" stroke-width="1.1" stroke-linejoin="round"/>
<rect x="280.5" y="392.5" width="89" height="117" fill="none" stroke="#117dbb" stroke-width="1"/>
</g>
<g id="core10">
<rect x="374.5" y="392.5" width="89" height="117" fill="#fff"/>
<path d="M389.5 392.5V509.5M404.5 392.5V509.5M419.5 392.5V509.5M434.5 392.5V509.5M449.5 392.5V509.5M374.5 404.5H463.5M374.5 415.5H463.5M374.5 427.5H463.5M374.5 439.5H463.5M374.5 450.5H463.5M374.5 462.5H463.5M374.5 474.5H463.5M374.5 486.5H463.5M374.5 497.5H463.5" stroke="#d9eaf4" stroke-width="1" fill="none"/>
<polygon points="391.3,509.0 392.5,493.7 394.2,498.1 395.5,498.6 397.5,500.6 398.8,498.6 400.5,498.4 401.6,494.8 404.3,494.6 406.5,492.6 407.6,499.5 409.3,500.6 412.6,494.2 413.7,494.8 416.5,501.4 419.5,497.0 422.6,501.4 425.6,489.6 427.5,498.6 429.2,499.2 430.3,500.3 431.7,492.6 433.4,497.0 434.7,493.7 436.4,497.8 437.5,497.5 439.2,498.6 441.4,497.5 443.6,497.5 445.6,493.7 446.9,494.6 448.3,493.7 449.3,500.6 452.6,486.5 454.4,499.5 457.1,496.4 460.2,500.3 461.8,500.3 463.5,497.0 463.5,509.5 391.3,509.5" fill="#117dbb" fill-opacity="0.07"/>
<polyline points="391.3,509.0 392.5,493.7 394.2,498.1 395.5,498.6 397.5,500.6 398.8,498.6 400.5,498.4 401.6,494.8 404.3,494.6 406.5,492.6 407.6,499.5 409.3,500.6 412.6,494.2 413.7,494.8 416.5,501.4 419.5,497.0 422.6,501.4 425.6,489.6 427.5,498.6 429.2,499.2 430.3,500.3 431.7,492.6 433.4,497.0 434.7,493.7 436.4,497.8 437.5,497.5 439.2,498.6 441.4,497.5 443.6,497.5 445.6,493.7 446.9,494.6 448.3,493.7 449.3,500.6 452.6,486.5 454.4,499.5 457.1,496.4 460.2,500.3 461.8,500.3 463.5,497.0" fill="none" stroke="#117dbb" stroke-width="1.1" stroke-linejoin="round"/>
<rect x="374.5" y="392.5" width="89" height="117" fill="none" stroke="#117dbb" stroke-width="1"/>
</g>
<text x="278" y="547.4" font-size="12" fill="#707070" textLength="51.5" lengthAdjust="spacingAndGlyphs">Utilization</text>
<text x="351.2" y="547.4" font-size="12" fill="#707070" textLength="31.5" lengthAdjust="spacingAndGlyphs">Speed</text>
<text x="278" y="597.9" font-size="12" fill="#707070" textLength="50.5" lengthAdjust="spacingAndGlyphs">Processes</text>
<text x="349.4" y="597.9" font-size="12" fill="#707070" textLength="40.5" lengthAdjust="spacingAndGlyphs">Threads</text>
<text x="413.2" y="597.9" font-size="12" fill="#707070" textLength="43" lengthAdjust="spacingAndGlyphs">Handles</text>
<text x="278" y="648.9" font-size="12" fill="#707070" textLength="42" lengthAdjust="spacingAndGlyphs">Up time</text>
<text x="278" y="573" font-size="20" fill="#000" textLength="37.5" lengthAdjust="spacingAndGlyphs">12%</text>
<text x="351" y="573" font-size="20" fill="#000" textLength="79.5" lengthAdjust="spacingAndGlyphs">3.95 GHz</text>
<text x="278" y="623.9" font-size="20" fill="#000" textLength="32" lengthAdjust="spacingAndGlyphs">170</text>
<text x="349" y="623.9" font-size="20" fill="#000" textLength="43.5" lengthAdjust="spacingAndGlyphs">2230</text>
<text x="413" y="623.9" font-size="20" fill="#000" textLength="54.5" lengthAdjust="spacingAndGlyphs">88389</text>
<text x="278" y="674.6" font-size="20" fill="#000" textLength="88.5" lengthAdjust="spacingAndGlyphs">0:09:32:25</text>
<text x="480" y="547.4" font-size="12" fill="#707070" textLength="61" lengthAdjust="spacingAndGlyphs">Base speed:</text>
<text x="593.9" y="547.4" font-size="12" fill="#000" textLength="46" lengthAdjust="spacingAndGlyphs">2.50 GHz</text>
<text x="480" y="565.35" font-size="12" fill="#707070" textLength="43" lengthAdjust="spacingAndGlyphs">Sockets:</text>
<text x="593.9" y="565.35" font-size="12" fill="#000" textLength="5" lengthAdjust="spacingAndGlyphs">1</text>
<text x="480" y="583.3" font-size="12" fill="#707070" textLength="32.5" lengthAdjust="spacingAndGlyphs">Cores:</text>
<text x="593.9" y="583.3" font-size="12" fill="#000" textLength="12.5" lengthAdjust="spacingAndGlyphs">10</text>
<text x="480" y="601.25" font-size="12" fill="#707070" textLength="99.5" lengthAdjust="spacingAndGlyphs">Logical processors:</text>
<text x="593.9" y="601.25" font-size="12" fill="#000" textLength="12.5" lengthAdjust="spacingAndGlyphs">10</text>
<text x="480" y="619.2" font-size="12" fill="#707070" textLength="71.5" lengthAdjust="spacingAndGlyphs">Virtualization:</text>
<text x="593.9" y="619.2" font-size="12" fill="#000" textLength="41.5" lengthAdjust="spacingAndGlyphs">Enabled</text>
<text x="480" y="637.15" font-size="12" fill="#707070" textLength="48.5" lengthAdjust="spacingAndGlyphs">L1 cache:</text>
<text x="593.9" y="637.15" font-size="12" fill="#000" textLength="35" lengthAdjust="spacingAndGlyphs">864 KB</text>
<text x="480" y="655.1" font-size="12" fill="#707070" textLength="48.5" lengthAdjust="spacingAndGlyphs">L2 cache:</text>
<text x="593.9" y="655.1" font-size="12" fill="#000" textLength="35.5" lengthAdjust="spacingAndGlyphs">9.5 MB</text>
<text x="480" y="673.05" font-size="12" fill="#707070" textLength="48.5" lengthAdjust="spacingAndGlyphs">L3 cache:</text>
<text x="593.9" y="673.05" font-size="12" fill="#000" textLength="42" lengthAdjust="spacingAndGlyphs">20.0 MB</text>
</g>
</svg>
</div>
</body>
</html>
